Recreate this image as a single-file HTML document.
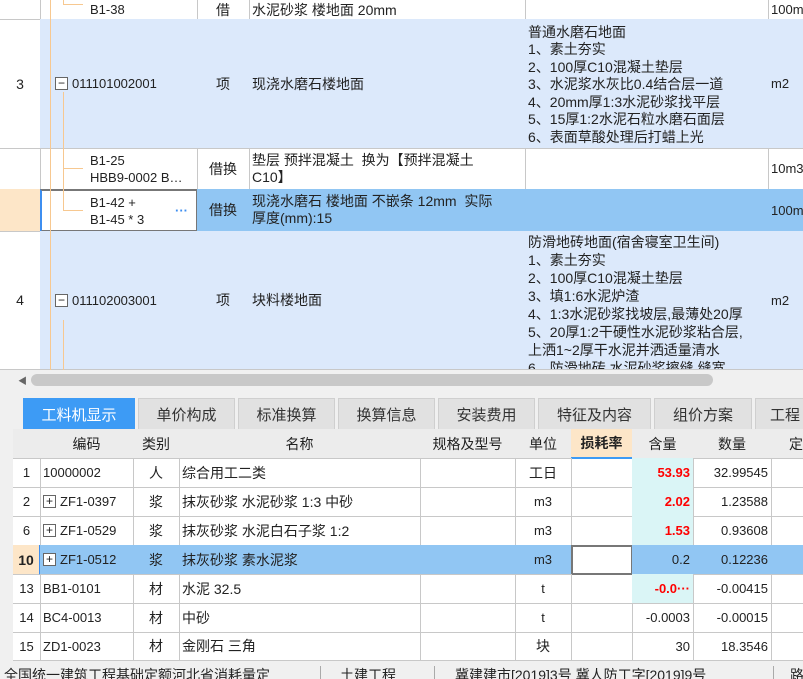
<!DOCTYPE html>
<html><head><meta charset="utf-8"><style>
*{margin:0;padding:0;box-sizing:border-box}
body{width:803px;height:679px;overflow:hidden;background:#f0f0f0;font-family:"Liberation Sans","Noto Sans CJK SC",sans-serif;font-size:14px;color:#222;position:relative}
.a{position:absolute;overflow:hidden;white-space:nowrap}
.c{position:absolute;overflow:hidden;white-space:nowrap;border-right:1px solid #c8c8c8;border-bottom:1px solid #c8c8c8;display:flex;align-items:center;padding:0 3px}
.m{font-size:13px}
.ctr{justify-content:center}
.r{justify-content:flex-end}
.lb{background:#dce9fb}
.sel{background:#91c6f3}
.tab{position:absolute;top:398px;height:31px;background:#e1e1e1;border:1px solid #cfcfcf;border-bottom:none;display:flex;align-items:center;justify-content:center;font-size:15px;color:#333}
.red{color:#f00;font-weight:bold}
.cy{background:#daf5f6}
.box{display:inline-block;width:13px;height:13px;border:1px solid #666;background:#fff;font-size:12px;line-height:10px;text-align:center;margin-right:4px;flex:none}
.ml{white-space:pre;line-height:18.5px;display:block;padding-top:3px}
</style></head><body>
<div class="a" style="left:0;top:0;width:803px;height:370px;background:#fff"></div>
<!-- row B1-38 -->
<div class="c" style="left:0;top:0;width:41px;height:20px"></div>
<div class="c m" style="left:40px;top:0;width:158px;height:20px;padding-left:50px">B1-38</div>
<div class="c ctr" style="left:197px;top:0;width:53px;height:20px">借</div>
<div class="c" style="left:249px;top:0;width:277px;height:20px">水泥砂浆 楼地面 20mm</div>
<div class="c" style="left:525px;top:0;width:244px;height:20px"></div>
<div class="c m" style="left:768px;top:0;width:40px;height:20px">100m2</div>
<!-- row 3 -->
<div class="c ctr" style="left:0;top:19px;width:41px;height:130px">3</div>
<div class="c lb m" style="left:40px;top:19px;width:158px;height:130px;padding-left:15px"><span class="box">−</span>011101002001</div>
<div class="c lb ctr" style="left:197px;top:19px;width:53px;height:130px">项</div>
<div class="c lb" style="left:249px;top:19px;width:277px;height:130px">现浇水磨石楼地面</div>
<div class="c lb" style="left:525px;top:19px;width:244px;height:130px"><span class="ml" style="line-height:17.5px">普通水磨石地面
1、素土夯实
2、100厚C10混凝土垫层
3、水泥浆水灰比0.4结合层一道
4、20mm厚1:3水泥砂浆找平层
5、15厚1:2水泥石粒水磨石面层
6、表面草酸处理后打蜡上光</span></div>
<div class="c lb m" style="left:768px;top:19px;width:40px;height:130px">m2</div>
<!-- row B1-25 -->
<div class="c" style="left:0;top:148px;width:41px;height:42px"></div>
<div class="c m" style="left:40px;top:148px;width:158px;height:42px;padding-left:50px"><span class="ml" style="line-height:17px;padding-top:0">B1-25
HBB9-0002 B…</span></div>
<div class="c ctr" style="left:197px;top:148px;width:53px;height:42px">借换</div>
<div class="c" style="left:249px;top:148px;width:277px;height:42px"><span class="ml" style="line-height:17px;padding-top:0">垫层 预拌混凝土  换为【预拌混凝土
C10】</span></div>
<div class="c" style="left:525px;top:148px;width:244px;height:42px"></div>
<div class="c m" style="left:768px;top:148px;width:40px;height:42px">10m3</div>
<!-- row B1-42 -->
<div class="c" style="left:0;top:189px;width:41px;height:43px;background:#fde6c8"></div>
<div class="c m" style="left:40px;top:189px;width:158px;height:43px;padding-left:48px;border:2px solid #777;border-left:2px solid #3d8ef0;background:#fff"><span class="ml" style="line-height:17px;padding-top:0">B1-42 +
B1-45 * 3</span><span style="position:absolute;right:8px;top:12px;color:#3d8ef0;font-weight:bold">···</span></div>
<div class="c sel ctr" style="left:197px;top:189px;width:53px;height:43px">借换</div>
<div class="c sel" style="left:249px;top:189px;width:277px;height:43px"><span class="ml" style="line-height:17px;padding-top:0">现浇水磨石 楼地面 不嵌条 12mm  实际
厚度(mm):15</span></div>
<div class="c sel" style="left:525px;top:189px;width:244px;height:43px"></div>
<div class="c sel m" style="left:768px;top:189px;width:40px;height:43px">100m2</div>
<!-- row 4 -->
<div class="c ctr" style="left:0;top:231px;width:41px;height:139px">4</div>
<div class="c lb m" style="left:40px;top:231px;width:158px;height:139px;padding-left:15px"><span class="box">−</span>011102003001</div>
<div class="c lb ctr" style="left:197px;top:231px;width:53px;height:139px">项</div>
<div class="c lb" style="left:249px;top:231px;width:277px;height:139px">块料楼地面</div>
<div class="c lb" style="left:525px;top:231px;width:244px;height:139px;align-items:flex-start"><span class="ml" style="padding-top:2px;line-height:18px">防滑地砖地面(宿舍寝室卫生间)
1、素土夯实
2、100厚C10混凝土垫层
3、填1:6水泥炉渣
4、1:3水泥砂浆找坡层,最薄处20厚
5、20厚1:2干硬性水泥砂浆粘合层,
上洒1~2厚干水泥并洒适量清水
6、防滑地砖,水泥砂浆擦缝,缝宽</span></div>
<div class="c lb m" style="left:768px;top:231px;width:40px;height:139px">m2</div>
<!-- tree lines -->
<div class="a" style="left:50px;top:0;width:1px;height:370px;background:#f7c890"></div>
<div class="a" style="left:63px;top:92px;width:1px;height:119px;background:#f7c890"></div>
<div class="a" style="left:63px;top:168px;width:20px;height:1px;background:#f7c890"></div>
<div class="a" style="left:63px;top:210px;width:20px;height:1px;background:#f7c890"></div>
<div class="a" style="left:63px;top:4px;width:20px;height:1px;background:#f7c890"></div>
<div class="a" style="left:63px;top:0;width:1px;height:5px;background:#f7c890"></div>
<div class="a" style="left:63px;top:320px;width:1px;height:50px;background:#f7c890"></div>
<!-- scrollbar -->
<div class="a" style="left:0;top:370px;width:803px;height:24px;background:#f0f0f0"></div>
<div class="a" style="left:31px;top:374px;width:682px;height:12px;background:#c8c8c8;border-radius:6px"></div>
<div class="a" style="left:18px;top:374px;font-size:9px;color:#666">◀</div>
<!-- tabs -->
<div class="tab" style="left:23px;width:112px;background:#3d9bf5;color:#fff;border-color:#3d9bf5">工料机显示</div>
<div class="tab" style="left:138px;width:97px">单价构成</div>
<div class="tab" style="left:238px;width:97px">标准换算</div>
<div class="tab" style="left:338px;width:97px">换算信息</div>
<div class="tab" style="left:438px;width:97px">安装费用</div>
<div class="tab" style="left:538px;width:113px">特征及内容</div>
<div class="tab" style="left:654px;width:98px">组价方案</div>
<div class="tab" style="left:755px;width:60px;justify-content:flex-start;padding-left:14px">工程</div>
<!-- bottom grid -->
<div class="a" style="left:13px;top:429px;width:790px;height:232px;background:#fff"></div>
<div class="c" style="left:13px;top:429px;width:28px;height:30px;background:#ececec"></div>
<div class="c ctr" style="left:40px;top:429px;width:94px;height:30px;background:#ececec">编码</div>
<div class="c ctr" style="left:133px;top:429px;width:47px;height:30px;background:#ececec">类别</div>
<div class="c ctr" style="left:179px;top:429px;width:242px;height:30px;background:#ececec">名称</div>
<div class="c ctr" style="left:420px;top:429px;width:96px;height:30px;background:#ececec">规格及型号</div>
<div class="c ctr" style="left:515px;top:429px;width:57px;height:30px;background:#ececec">单位</div>
<div class="c ctr" style="left:571px;top:429px;width:62px;height:30px;background:#fde6c8;font-weight:bold;border-bottom:2px solid #3d9bf5">损耗率</div>
<div class="c ctr" style="left:632px;top:429px;width:62px;height:30px;background:#ececec">含量</div>
<div class="c ctr" style="left:693px;top:429px;width:79px;height:30px;background:#ececec">数量</div>
<div class="c" style="left:771px;top:429px;width:40px;height:30px;background:#ececec;padding-left:18px">定</div>

<!-- row 1 -->
<div class="c ctr m" style="left:13px;top:458px;width:28px;height:30px">1</div>
<div class="c m" style="left:40px;top:458px;width:94px;height:30px">10000002</div>
<div class="c ctr" style="left:133px;top:458px;width:47px;height:30px">人</div>
<div class="c" style="left:179px;top:458px;width:242px;height:30px">综合用工二类</div>
<div class="c" style="left:420px;top:458px;width:96px;height:30px"></div>
<div class="c ctr" style="left:515px;top:458px;width:57px;height:30px">工日</div>
<div class="c" style="left:571px;top:458px;width:62px;height:30px"></div>
<div class="c r cy red m" style="left:632px;top:458px;width:62px;height:30px">53.93</div>
<div class="c r m" style="left:693px;top:458px;width:79px;height:30px">32.99545</div>
<div class="c" style="left:771px;top:458px;width:40px;height:30px"></div>
<!-- row 2 -->
<div class="c ctr m" style="left:13px;top:487px;width:28px;height:30px">2</div>
<div class="c m" style="left:40px;top:487px;width:94px;height:30px"><span class="box">+</span>ZF1-0397</div>
<div class="c ctr" style="left:133px;top:487px;width:47px;height:30px">浆</div>
<div class="c" style="left:179px;top:487px;width:242px;height:30px">抹灰砂浆 水泥砂浆 1:3 中砂</div>
<div class="c" style="left:420px;top:487px;width:96px;height:30px"></div>
<div class="c ctr m" style="left:515px;top:487px;width:57px;height:30px">m3</div>
<div class="c" style="left:571px;top:487px;width:62px;height:30px"></div>
<div class="c r cy red m" style="left:632px;top:487px;width:62px;height:30px">2.02</div>
<div class="c r m" style="left:693px;top:487px;width:79px;height:30px">1.23588</div>
<div class="c" style="left:771px;top:487px;width:40px;height:30px"></div>
<!-- row 6 -->
<div class="c ctr m" style="left:13px;top:516px;width:28px;height:30px">6</div>
<div class="c m" style="left:40px;top:516px;width:94px;height:30px"><span class="box">+</span>ZF1-0529</div>
<div class="c ctr" style="left:133px;top:516px;width:47px;height:30px">浆</div>
<div class="c" style="left:179px;top:516px;width:242px;height:30px">抹灰砂浆 水泥白石子浆 1:2</div>
<div class="c" style="left:420px;top:516px;width:96px;height:30px"></div>
<div class="c ctr m" style="left:515px;top:516px;width:57px;height:30px">m3</div>
<div class="c" style="left:571px;top:516px;width:62px;height:30px"></div>
<div class="c r cy red m" style="left:632px;top:516px;width:62px;height:30px">1.53</div>
<div class="c r m" style="left:693px;top:516px;width:79px;height:30px">0.93608</div>
<div class="c" style="left:771px;top:516px;width:40px;height:30px"></div>
<!-- row 10 -->
<div class="c ctr m" style="left:13px;top:545px;width:28px;height:30px;background:#fde6c8;font-weight:bold;font-size:14px;border-right:2px solid #3d8ef0">10</div>
<div class="c sel m" style="left:40px;top:545px;width:94px;height:30px"><span class="box">+</span>ZF1-0512</div>
<div class="c sel ctr" style="left:133px;top:545px;width:47px;height:30px">浆</div>
<div class="c sel" style="left:179px;top:545px;width:242px;height:30px">抹灰砂浆 素水泥浆</div>
<div class="c sel" style="left:420px;top:545px;width:96px;height:30px"></div>
<div class="c sel ctr m" style="left:515px;top:545px;width:57px;height:30px">m3</div>
<div class="c" style="left:571px;top:545px;width:62px;height:30px;background:#fff;border:2px solid #777"></div>
<div class="c sel r m" style="left:632px;top:545px;width:62px;height:30px">0.2</div>
<div class="c sel r m" style="left:693px;top:545px;width:79px;height:30px">0.12236</div>
<div class="c sel" style="left:771px;top:545px;width:40px;height:30px"></div>
<!-- row 13 -->
<div class="c ctr m" style="left:13px;top:574px;width:28px;height:30px">13</div>
<div class="c m" style="left:40px;top:574px;width:94px;height:30px">BB1-0101</div>
<div class="c ctr" style="left:133px;top:574px;width:47px;height:30px">材</div>
<div class="c" style="left:179px;top:574px;width:242px;height:30px">水泥 32.5</div>
<div class="c" style="left:420px;top:574px;width:96px;height:30px"></div>
<div class="c ctr m" style="left:515px;top:574px;width:57px;height:30px">t</div>
<div class="c" style="left:571px;top:574px;width:62px;height:30px"></div>
<div class="c r cy red m" style="left:632px;top:574px;width:62px;height:30px">-0.0···</div>
<div class="c r m" style="left:693px;top:574px;width:79px;height:30px">-0.00415</div>
<div class="c" style="left:771px;top:574px;width:40px;height:30px"></div>
<!-- row 14 -->
<div class="c ctr m" style="left:13px;top:603px;width:28px;height:30px">14</div>
<div class="c m" style="left:40px;top:603px;width:94px;height:30px">BC4-0013</div>
<div class="c ctr" style="left:133px;top:603px;width:47px;height:30px">材</div>
<div class="c" style="left:179px;top:603px;width:242px;height:30px">中砂</div>
<div class="c" style="left:420px;top:603px;width:96px;height:30px"></div>
<div class="c ctr m" style="left:515px;top:603px;width:57px;height:30px">t</div>
<div class="c" style="left:571px;top:603px;width:62px;height:30px"></div>
<div class="c r m" style="left:632px;top:603px;width:62px;height:30px">-0.0003</div>
<div class="c r m" style="left:693px;top:603px;width:79px;height:30px">-0.00015</div>
<div class="c" style="left:771px;top:603px;width:40px;height:30px"></div>
<!-- row 15 -->
<div class="c ctr m" style="left:13px;top:632px;width:28px;height:29px">15</div>
<div class="c m" style="left:40px;top:632px;width:94px;height:29px">ZD1-0023</div>
<div class="c ctr" style="left:133px;top:632px;width:47px;height:29px">材</div>
<div class="c" style="left:179px;top:632px;width:242px;height:29px">金刚石 三角</div>
<div class="c" style="left:420px;top:632px;width:96px;height:29px"></div>
<div class="c ctr" style="left:515px;top:632px;width:57px;height:29px">块</div>
<div class="c" style="left:571px;top:632px;width:62px;height:29px"></div>
<div class="c r m" style="left:632px;top:632px;width:62px;height:29px">30</div>
<div class="c r m" style="left:693px;top:632px;width:79px;height:29px">18.3546</div>
<div class="c" style="left:771px;top:632px;width:40px;height:29px"></div>
<!-- status bar -->
<div class="a" style="left:0;top:663px;width:803px;height:16px;background:#f0f0f0;font-size:14px;line-height:24px">
<span class="a" style="left:4px;top:0">全国统一建筑工程基础定额河北省消耗量定</span>
<span class="a" style="left:320px;top:3px;width:1px;height:13px;background:#aaa"></span>
<span class="a" style="left:340px;top:0">土建工程</span>
<span class="a" style="left:434px;top:3px;width:1px;height:13px;background:#aaa"></span>
<span class="a" style="left:455px;top:0">冀建建市[2019]3号 冀人防工字[2019]9号</span>
<span class="a" style="left:773px;top:3px;width:1px;height:13px;background:#aaa"></span>
<span class="a" style="left:790px;top:0">路</span>
</div>
</body></html>
